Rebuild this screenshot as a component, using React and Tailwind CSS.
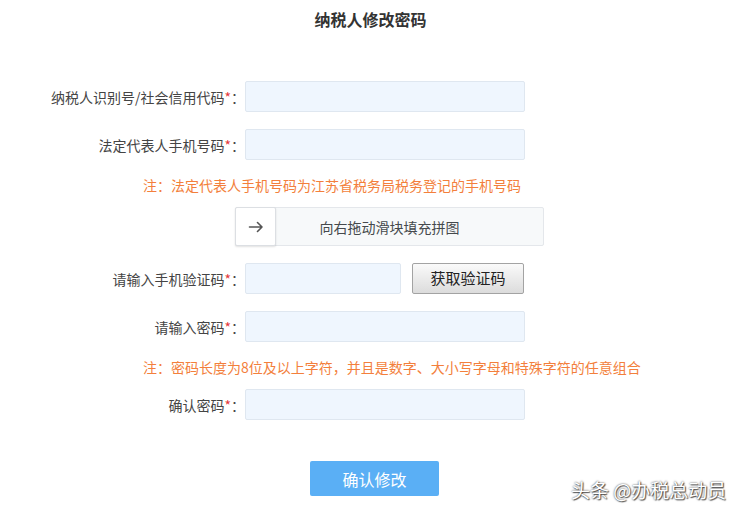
import React from "react";

const font = { fontFamily: '"Noto Sans CJK SC", "Noto Sans", sans-serif' };

function Label({ children }) {
  return (
    <div className="w-[245px] shrink-0 text-right text-[14px] leading-[20px] text-[#444]">
      {children}
      <span className="text-[#e4393c]">*</span>：
    </div>
  );
}

function Input({ w = "w-[280px]" }) {
  return <div className={`${w} h-[31px] rounded-[2px] border border-[#dfe7f0] bg-[#eff6fe]`} />;
}

export default function App() {
  return (
    <div className="relative w-[741px] h-[514px] bg-white overflow-hidden" style={font}>
      <div className="pt-[9px] text-center text-[16px] leading-[20px] font-bold text-[#333]">纳税人修改密码</div>

      <div className="mt-[52px] flex items-center">
        <Label>纳税人识别号/社会信用代码</Label>
        <Input />
      </div>

      <div className="mt-[17px] flex items-center">
        <Label>法定代表人手机号码</Label>
        <Input />
      </div>

      <div className="mt-[15px] ml-[143px] text-[14px] leading-[20px] text-[#f37f3c]">
        注：法定代表人手机号码为江苏省税务局税务登记的手机号码
      </div>

      <div className="mt-[12px] ml-[235px] w-[309px] h-[39px] relative flex items-center justify-center rounded-[2px] border border-[#e4e7eb] bg-[#f7f9fa]">
        <div className="absolute left-[-1px] top-[-1px] w-[41px] h-[39px] flex items-center justify-center bg-white border border-[#dcdfe3] shadow-[0_1px_2px_rgba(0,0,0,0.12)] rounded-[2px]">
          <svg width="16" height="12" viewBox="0 0 16 12" fill="none" stroke="#555" strokeWidth="1.6" strokeLinecap="round" strokeLinejoin="round">
            <path d="M1.5 6h12.5M9.5 1.5 14 6l-4.5 4.5" />
          </svg>
        </div>
        <span className="text-[14px] leading-[20px] text-[#45494c]">向右拖动滑块填充拼图</span>
      </div>

      <div className="mt-[17px] flex items-center">
        <Label>请输入手机验证码</Label>
        <Input w="w-[156px]" />
        <div className="ml-[11px] w-[112px] h-[31px] flex items-center justify-center rounded-[2px] border border-[#a3a3a3] bg-gradient-to-b from-[#fafafa] to-[#dcdcdc] text-[15px] text-[#222]">
          获取验证码
        </div>
      </div>

      <div className="mt-[17px] flex items-center">
        <Label>请输入密码</Label>
        <Input />
      </div>

      <div className="mt-[15px] ml-[143px] text-[14px] leading-[20px] text-[#f37f3c]">
        注：密码长度为8位及以上字符，并且是数字、大小写字母和特殊字符的任意组合
      </div>

      <div className="mt-[12px] flex items-center">
        <Label>确认密码</Label>
        <Input />
      </div>

      <div className="mt-[41px] ml-[310px] w-[129px] h-[35px] flex items-center justify-center rounded-[2px] bg-[#5aaff5] text-white text-[16px]">
        确认修改
      </div>

      <div className="absolute left-[571px] top-[477px] text-[19px] leading-[26px] text-white [text-shadow:0_0_2px_rgba(0,0,0,0.8),1px_1px_1px_rgba(0,0,0,0.6)]">
        头条 @办税总动员
      </div>
    </div>
  );
}
